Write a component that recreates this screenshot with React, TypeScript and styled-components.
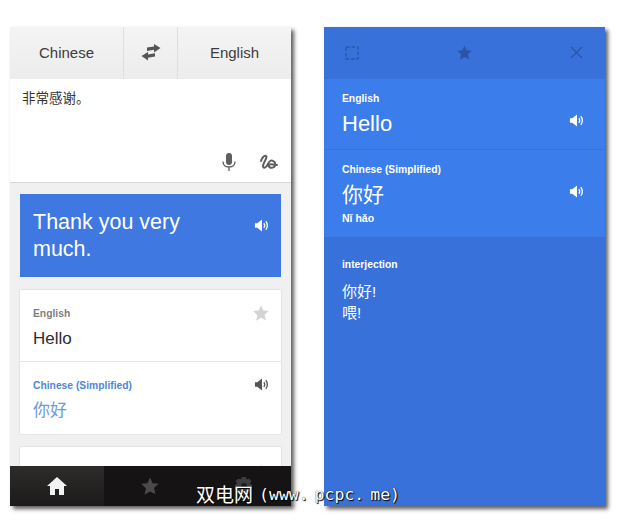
import React from "react";
import styled, { createGlobalStyle } from "styled-components";

const sans = `"Liberation Sans", "Noto Sans CJK SC", sans-serif`;

const GlobalStyle = createGlobalStyle`
  html, body {
    margin: 0;
    background: #fff;
    font-family: ${sans};
  }
`;

const Speaker = ({ color, size = 15 }: { color: string; size?: number }) => (
  <svg width={size} height={size} viewBox="0 0 16 16" fill="none">
    <path d="M1 5.500h2.500L8.500 1.500v13l-5-4H1z" fill={color} />
    <path d="M10.500 5.500c1.200 1.300 1.200 3.700 0 5" stroke={color} strokeWidth="1.500" />
    <path d="M12.500 3.500c2.300 2.400 2.300 6.600 0 9" stroke={color} strokeWidth="1.400" />
  </svg>
);

const Star = ({ color, size = 16 }: { color: string; size?: number }) => (
  <svg width={size} height={size} viewBox="0 0 16 16">
    <path d="M8 .5l2.300 5.100 5.400.5-4.100 3.600 1.300 5.500L8 12.800l-4.900 2.900 1.300-5.500L.300 6.100l5.400-.5z" fill={color} />
  </svg>
);

const Swap = () => (
  <svg width="20" height="17" viewBox="0 0 20 17" fill="#555">
    <path d="M19.500 4L13 0v2.400L6 3.500v3.400l7-1.200V8.500z" />
    <path d="M.5 12L7 8v2.400l7-1.200v3.400l-7 1.100V16.500z" />
  </svg>
);

const Mic = () => (
  <svg width="16" height="19" viewBox="0 0 16 19" fill="none">
    <rect x="5" y="0" width="6" height="12" rx="3" fill="#5f5f5f" />
    <path d="M2 8.500c0 3.500 2.500 5.500 6 5.500s6-2 6-5.500M8 14v4" stroke="#5f5f5f" strokeWidth="1.300" />
  </svg>
);

const Squiggle = () => (
  <svg width="20" height="17" viewBox="0 0 20 17" fill="none">
    <path
      d="M2 7c1-3 3-6 5-5 2 1-3 7-3 10 0 3 3 2 5-2 1-3 3-4 5-3 3 1 3 5 1 6-3 2-6 0-5-2 1-2 4 0 8 0"
      stroke="#5f5f5f"
      strokeWidth="2"
      strokeLinecap="round"
    />
  </svg>
);

const Home = () => (
  <svg width="20" height="18" viewBox="0 0 20 18">
    <path d="M10 0L0 9h3v9h5v-6h4v6h5V9h3z" fill="#f2f2f2" />
  </svg>
);

const Gear = () => (
  <svg width="18" height="18" viewBox="0 0 18 18">
    <path
      d="M7 0h4l.6 2.600 2.400-1 2.600 3-1.800 2 2.200 1.400v4l-2.600.6 1 2.400-3 2.600-2-1.800-1.400 2.200h-2L6.300 15.800l-2 1.800-3-2.600 1-2.400L0 12V8l2.200-1.400-1.800-2 2.600-3 2.400 1z"
      fill="#3d3d3d"
    />
    <circle cx="9" cy="9" r="3" fill="#1a1a1a" />
  </svg>
);

const Expand = () => (
  <svg width="14" height="14" viewBox="0 0 14 14" fill="none">
    <rect x="1" y="1" width="12" height="12" stroke="#2a55a5" strokeWidth="1.300" strokeDasharray="3.500 2" />
  </svg>
);

const Close = () => (
  <svg width="13" height="13" viewBox="0 0 13 13" fill="none">
    <path d="M1 1l11 11M12 1L1 12" stroke="#2a55a5" strokeWidth="1.200" />
  </svg>
);

const Stage = styled.div`
  position: relative;
  width: 640px;
  height: 520px;
  box-sizing: border-box;
  padding: 27px 0 0 10px;
  display: flex;
  gap: 33px;
  overflow: hidden;
`;

const Phone = styled.div<{ $bg: string }>`
  width: 281px;
  height: 479px;
  display: flex;
  flex-direction: column;
  overflow: hidden;
  background: ${(p) => p.$bg};
  box-shadow: 3px 3px 4px rgba(40, 40, 40, 0.75);
  flex: none;
`;

const LangBar = styled.div`
  height: 52px;
  flex: none;
  display: grid;
  grid-template-columns: 113px 54px 1fr;
  background: linear-gradient(#f4f4f4, #ececec);
`;

const LangCell = styled.div`
  display: flex;
  align-items: center;
  justify-content: center;
  padding-bottom: 2px;
  font-size: 15px;
  color: #3c3c3c;
  & + & {
    border-left: 1px solid #dedede;
  }
`;

const InputBox = styled.div`
  height: 104px;
  flex: none;
  box-sizing: border-box;
  padding: 8px 12px 10px;
  background: #fff;
  border-bottom: 1px solid #d8d8d8;
  display: flex;
  flex-direction: column;
  justify-content: space-between;
  font-size: 13.500px;
  color: #333;
`;

const InputTools = styled.div`
  display: flex;
  justify-content: flex-end;
  align-items: center;
  gap: 22px;
`;

const Results = styled.div`
  flex: 1;
  min-height: 0;
  overflow: hidden;
  display: flex;
  flex-direction: column;
  padding: 11px 9px 0;
  background: #f0f0f0;
`;

const TranslationCard = styled.div`
  flex: none;
  height: 83px;
  margin: 0 1px 12px;
  box-sizing: border-box;
  padding: 15px 12px 0 13px;
  display: flex;
  justify-content: space-between;
  align-items: flex-start;
  background: #3f78e0;
  color: #fff;
  font-size: 21.500px;
  line-height: 27px;
`;

const CardText = styled.div`
  width: 170px;
`;

const Card = styled.div`
  flex: none;
  background: #fff;
  border: 1px solid #e4e4e4;
  border-radius: 2px;
  margin-bottom: 11px;
`;

const CardRow = styled.div<{ $height: number }>`
  height: ${(p) => p.$height}px;
  box-sizing: border-box;
  padding: 17px 12px 0 13px;
  display: flex;
  justify-content: space-between;
  align-items: flex-start;
  & + & {
    border-top: 1px solid #e6e6e6;
  }
`;

const Label = styled.div<{ $color: string }>`
  font-size: 10.300px;
  font-weight: 700;
  color: ${(p) => p.$color};
  line-height: 14px;
`;

const Word = styled.div<{ $color: string }>`
  margin-top: 8px;
  font-size: 17px;
  line-height: 20px;
  color: ${(p) => p.$color};
`;

const TabBar = styled.div`
  height: 40px;
  flex: none;
  display: grid;
  grid-template-columns: repeat(3, 1fr);
  background: #151313;
`;

const Tab = styled.div<{ $active?: boolean }>`
  display: flex;
  align-items: center;
  justify-content: center;
  background: ${(p) => (p.$active ? "linear-gradient(#2e2b2b, #1c1a1a)" : "transparent")};
`;

const TopBar = styled.div`
  height: 53px;
  flex: none;
  box-sizing: border-box;
  padding: 0 22px 0 21px;
  display: flex;
  justify-content: space-between;
  align-items: center;
  margin-top: -1px;
`;

const Section = styled.div<{ $height: number }>`
  height: ${(p) => p.$height}px;
  flex: none;
  box-sizing: border-box;
  padding: 13px 21px 0 18px;
  display: flex;
  justify-content: space-between;
  align-items: flex-start;
  background: #3b7dea;
  color: #fff;
  & + & {
    border-top: 1px solid #3a73d8;
  }
`;

const BigWord = styled.div<{ $size: number }>`
  margin-top: 4px;
  font-size: ${(p) => p.$size}px;
  line-height: 28px;
`;

const Pinyin = styled.div`
  margin-top: 2px;
  font-size: 10.500px;
  font-weight: 700;
  line-height: 14px;
`;

const IconSlot = styled.div<{ $top: number }>`
  margin-top: ${(p) => p.$top}px;
`;

const Definitions = styled.div`
  padding: 21px 18px 0;
  color: #fff;
`;

const DefinitionList = styled.div`
  margin-top: 9px;
  font-size: 15px;
  line-height: 21px;
`;

const Watermark = styled.div`
  position: absolute;
  left: 196px;
  top: 482px;
  font-size: 19px;
  line-height: 24px;
  color: #fff;
  white-space: nowrap;
  text-shadow: 1px 1px 1px #000;
  font-family: "Noto Sans CJK SC", sans-serif;
`;

const WatermarkLatin = styled.span`
  margin-left: 6px;
  font-family: "DejaVu Sans Mono", monospace;
  font-size: 16.500px;
  word-spacing: -4px;
  vertical-align: 2px;
  text-shadow: 1px 1px 1px #000, 0 0 1px #000;
`;

export default function App() {
  return (
    <Stage>
      <GlobalStyle />
      <Phone $bg="#f0f0f0">
        <LangBar>
          <LangCell>Chinese</LangCell>
          <LangCell>
            <Swap />
          </LangCell>
          <LangCell>English</LangCell>
        </LangBar>
        <InputBox>
          <div>非常感谢。</div>
          <InputTools>
            <Mic />
            <Squiggle />
          </InputTools>
        </InputBox>
        <Results>
          <TranslationCard>
            <CardText>Thank you very much.</CardText>
            <IconSlot $top={4}>
              <Speaker color="#fff" />
            </IconSlot>
          </TranslationCard>
          <Card>
            <CardRow $height={71}>
              <div>
                <Label $color="#808080">English</Label>
                <Word $color="#2c2c2c">Hello</Word>
              </div>
              <IconSlot $top={-2}>
                <Star color="#d4d4d4" />
              </IconSlot>
            </CardRow>
            <CardRow $height={73}>
              <div>
                <Label $color="#4f86d8">Chinese (Simplified)</Label>
                <Word $color="#6d9bdc">你好</Word>
              </div>
              <IconSlot $top={-2}>
                <Speaker color="#555" />
              </IconSlot>
            </CardRow>
          </Card>
          <Card>
            <CardRow $height={71}>
              <div>
                <Label $color="#808080">English</Label>
              </div>
              <Star color="#d4d4d4" />
            </CardRow>
          </Card>
        </Results>
        <TabBar>
          <Tab $active>
            <Home />
          </Tab>
          <Tab>
            <Star color="#4a4a4a" size={18} />
          </Tab>
          <Tab>
            <Gear />
          </Tab>
        </TabBar>
      </Phone>
      <Phone $bg="#3871d9">
        <TopBar>
          <Expand />
          <Star color="#2a55a5" size={15} />
          <Close />
        </TopBar>
        <Section $height={70}>
          <div>
            <Label $color="#fff">English</Label>
            <BigWord $size={22}>Hello</BigWord>
          </div>
          <IconSlot $top={21}>
            <Speaker color="#fff" />
          </IconSlot>
        </Section>
        <Section $height={88}>
          <div>
            <Label $color="#fff">Chinese (Simplified)</Label>
            <BigWord $size={21}>你好</BigWord>
            <Pinyin>Nǐ hǎo</Pinyin>
          </div>
          <IconSlot $top={21}>
            <Speaker color="#fff" />
          </IconSlot>
        </Section>
        <Definitions>
          <Label $color="#fff">interjection</Label>
          <DefinitionList>
            <div>你好!</div>
            <div>喂!</div>
          </DefinitionList>
        </Definitions>
      </Phone>
      <Watermark>
        双电网<WatermarkLatin>(www. pcpc. me)</WatermarkLatin>
      </Watermark>
    </Stage>
  );
}
